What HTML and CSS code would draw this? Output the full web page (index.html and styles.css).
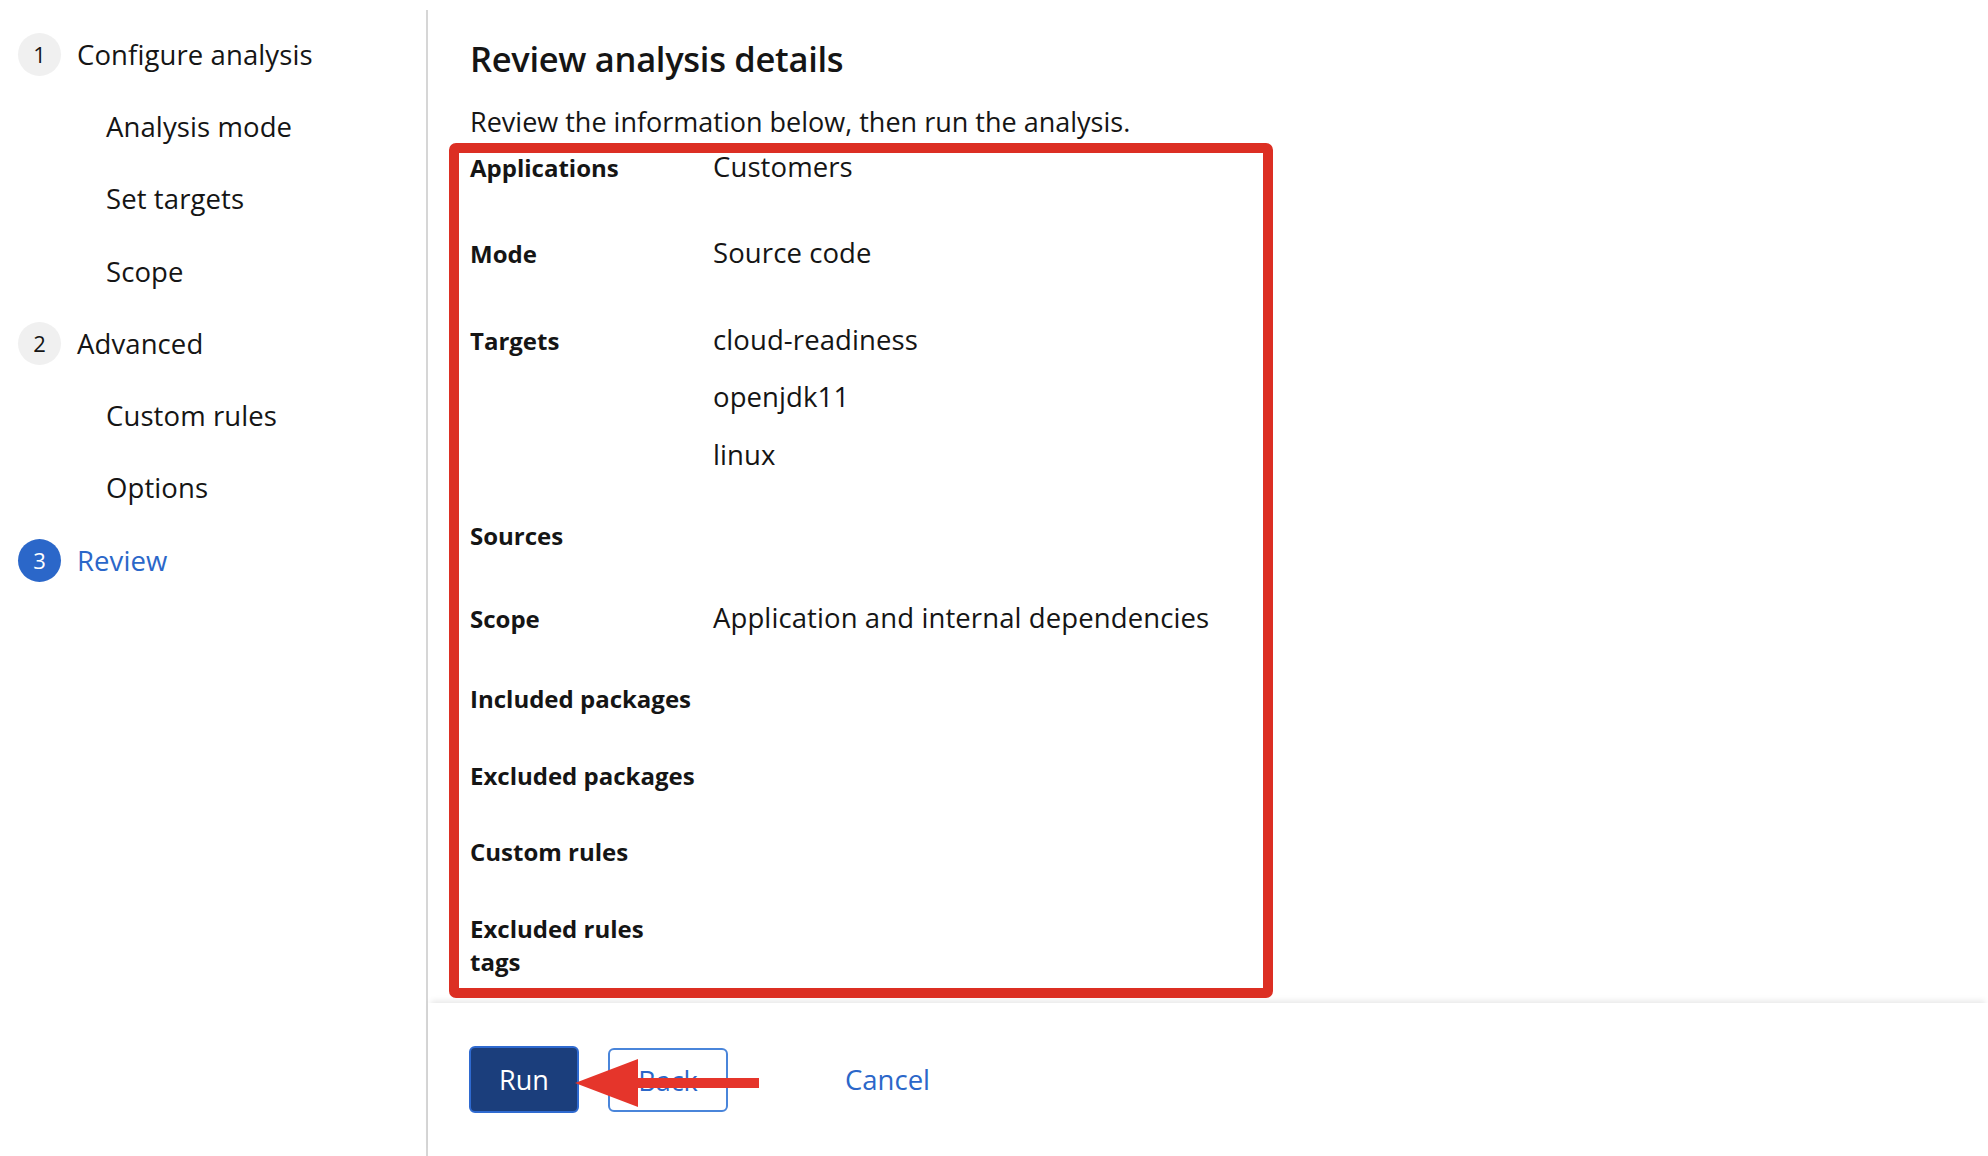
FILE: index.html
```html
<!DOCTYPE html>
<html lang="en">
<head>
<meta charset="utf-8">
<title>Review analysis details</title>
<link rel="stylesheet" href="styles.css">
</head>
<body>
<div class="wizard">
  <nav class="nav">
    <ol class="nav-list">
      <li class="nav-step"><span class="step-num">1</span><span class="step-label">Configure analysis</span></li>
      <li class="nav-sub">Analysis mode</li>
      <li class="nav-sub">Set targets</li>
      <li class="nav-sub">Scope</li>
      <li class="nav-step"><span class="step-num">2</span><span class="step-label">Advanced</span></li>
      <li class="nav-sub">Custom rules</li>
      <li class="nav-sub">Options</li>
      <li class="nav-step is-current"><span class="step-num">3</span><span class="step-label">Review</span></li>
    </ol>
  </nav>
  <main class="main">
    <section class="body">
      <h2 class="title">Review analysis details</h2>
      <p class="subtitle">Review the information below, then run the analysis.</p>
      <dl class="details">
        <div class="row"><dt>Applications</dt><dd><div class="val">Customers</div></dd></div>
        <div class="row"><dt>Mode</dt><dd><div class="val">Source code</div></dd></div>
        <div class="row"><dt>Targets</dt><dd class="list"><div class="val">cloud-readiness</div><div class="val">openjdk11</div><div class="val">linux</div></dd></div>
        <div class="row"><dt>Sources</dt><dd></dd></div>
        <div class="row"><dt>Scope</dt><dd><div class="val">Application and internal dependencies</div></dd></div>
        <div class="row"><dt>Included packages</dt><dd></dd></div>
        <div class="row"><dt>Excluded packages</dt><dd></dd></div>
        <div class="row"><dt>Custom rules</dt><dd></dd></div>
        <div class="row"><dt>Excluded rules<br>tags</dt><dd></dd></div>
      </dl>
    </section>
    <footer class="footer">
      <button class="btn btn-primary" type="button">Run</button>
      <button class="btn btn-secondary" type="button">Back</button>
      <button class="btn btn-link" type="button">Cancel</button>
    </footer>
  </main>
</div>
<div class="annot-box"></div>
<svg class="annot-arrow" width="195" height="60" viewBox="0 0 195 60" aria-hidden="true">
  <polygon points="5,30 68,6 68,25 189,25 189,35 68,35 68,54" fill="#e5352b"/>
</svg>
</body>
</html>
```
FILE: styles.css
```css
* { box-sizing: border-box; }
html, body { margin: 0; padding: 0; background: #fff; }
body {
  font-family: "Open Sans", "Liberation Sans", sans-serif;
  color: #151515;
  width: 1988px;
  height: 1156px;
  overflow: hidden;
  position: relative;
}
.wizard {
  display: flex;
  margin-top: 10px;
  height: 1146px;
}
.nav {
  width: 428px;
  flex: none;
  border-right: 2px solid #d6d6d6;
}
.nav-list {
  list-style: none;
  margin: 0;
  padding: 8px 0 0 0;
}
.nav-step, .nav-sub {
  height: 72.3px;
  display: flex;
  align-items: center;
  font-size: 27.5px;
  letter-spacing: 0.1px;
  color: #151515;
}
.nav-step { padding-left: 18px; gap: 16px; }
.nav-sub { padding-left: 106px; }
.step-num {
  width: 43px;
  height: 43px;
  border-radius: 50%;
  background: #f0f0f0;
  display: flex;
  align-items: center;
  justify-content: center;
  font-size: 22px;
  letter-spacing: 0;
  color: #151515;
}
.is-current .step-num { background: #2b67c9; color: #fff; }
.is-current .step-label { color: #2b67c9; }

.main {
  flex: 1;
  display: flex;
  flex-direction: column;
}
.body {
  flex: 1;
  padding: 27px 42px 0 42px;
}
.title {
  margin: 0 0 21px 0;
  font-size: 34.5px;
  line-height: 44px;
  font-weight: 600;
  letter-spacing: -0.3px;
}
.subtitle {
  margin: 0 0 2.5px 0;
  font-size: 27px;
  line-height: 40px;
}
.details {
  margin: 0;
  display: flex;
  flex-direction: column;
  gap: 43.5px;
}
.row {
  display: grid;
  grid-template-columns: 243px 1fr;
  align-items: baseline;
}
.row dt {
  font-size: 24px;
  line-height: 33px;
  font-weight: 700;
}
.row dd { margin: 0; }
.val {
  font-size: 27.5px;
  line-height: 43px;
  letter-spacing: 0.1px;
}
.list { display: flex; flex-direction: column; gap: 14.5px; }

.footer {
  height: 153px;
  flex: none;
  padding: 43px 0 0 41px;
  display: flex;
  align-items: flex-start;
  box-shadow: 0 -5px 6px -3px rgba(0, 0, 0, 0.10);
  position: relative;
}
.btn {
  font-family: "Open Sans", "Liberation Sans", sans-serif;
  font-size: 27px;
  border-radius: 6px;
  cursor: pointer;
  padding: 0;
}
.btn-primary {
  width: 110px;
  height: 67px;
  background: #1b3e7c;
  color: #fff;
  border: 2px solid #2f6ad0;
}
.btn-secondary {
  width: 120px;
  height: 64px;
  margin: 2px 0 0 29px;
  background: #fff;
  color: #2b67c9;
  border: 2px solid #4a85da;
}
.btn-link {
  height: 67px;
  margin-left: 117px;
  background: transparent;
  border: none;
  color: #2b67c9;
  font-size: 27.5px;
}

.annot-box {
  position: absolute;
  left: 449px;
  top: 143px;
  width: 824px;
  height: 855px;
  border: 10px solid #dc2f23;
  border-radius: 7px;
  pointer-events: none;
}
.annot-arrow {
  position: absolute;
  left: 570px;
  top: 1053px;
}
```
